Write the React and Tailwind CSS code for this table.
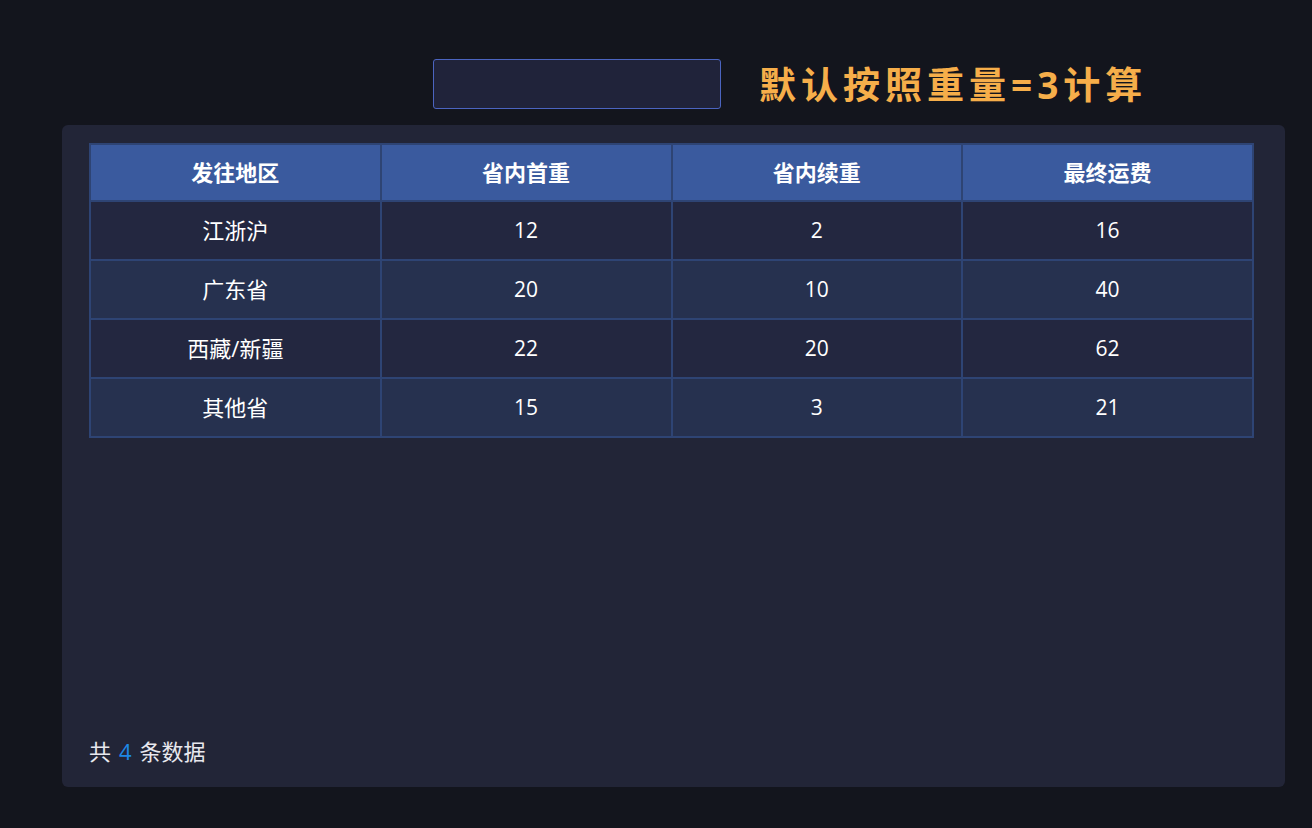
import React from 'react';

const rows = [
  { area: '江浙沪', first: 12, extra: 2, total: 16 },
  { area: '广东省', first: 20, extra: 10, total: 40 },
  { area: '西藏/新疆', first: 22, extra: 20, total: 62 },
  { area: '其他省', first: 15, extra: 3, total: 21 },
];

const font = { fontFamily: '"Open Sans", "Noto Sans CJK SC", sans-serif' };

const App = () => {
  return (
    <div className="min-h-screen bg-[#13151d] pt-[59px] pl-[62px] pr-[27px] pb-[41px]" style={font}>
      {/* 顶部输入 + 说明 */}
      <div className="flex items-center pl-[371px] h-[50px]">
        <input
          className="w-[288px] h-[50px] rounded-[3px] border border-[#4b64c0] bg-[#20233a] outline-none px-3 text-white"
        />
        <h1 className="ml-[38px] text-[37px] font-bold tracking-[5px] text-[#f6ae4a] leading-none">
          默认按照重量=3计算
        </h1>
      </div>

      {/* 表格卡片 */}
      <div className="mt-[16px] h-[662px] rounded-[6px] bg-[#222537] pl-[27px] pr-[31px] pt-[18px] pb-[19px] flex flex-col">
        <table className="w-full border-collapse table-fixed text-white">
          <thead>
            <tr className="bg-[#3a5a9e] h-[57px]">
              {['发往地区', '省内首重', '省内续重', '最终运费'].map(h => (
                <th key={h} className="border-2 border-[#2e4474] text-[22px] font-bold">
                  {h}
                </th>
              ))}
            </tr>
          </thead>
          <tbody>
            {rows.map((r, i) => (
              <tr key={r.area} className={`h-[59px] ${i % 2 === 0 ? 'bg-[#232740]' : 'bg-[#26314f]'}`}>
                <td className="border-2 border-[#2e4474] text-center text-[22px]">{r.area}</td>
                <td className="border-2 border-[#2e4474] text-center text-[21px]">{r.first}</td>
                <td className="border-2 border-[#2e4474] text-center text-[21px]">{r.extra}</td>
                <td className="border-2 border-[#2e4474] text-center text-[21px]">{r.total}</td>
              </tr>
            ))}
          </tbody>
        </table>

        <div className="mt-auto text-[22px] text-[#e8e8ee]">
          共<span className="px-[8px] text-[#1e88e5]">{rows.length}</span>条数据
        </div>
      </div>
    </div>
  );
};

export default App;
